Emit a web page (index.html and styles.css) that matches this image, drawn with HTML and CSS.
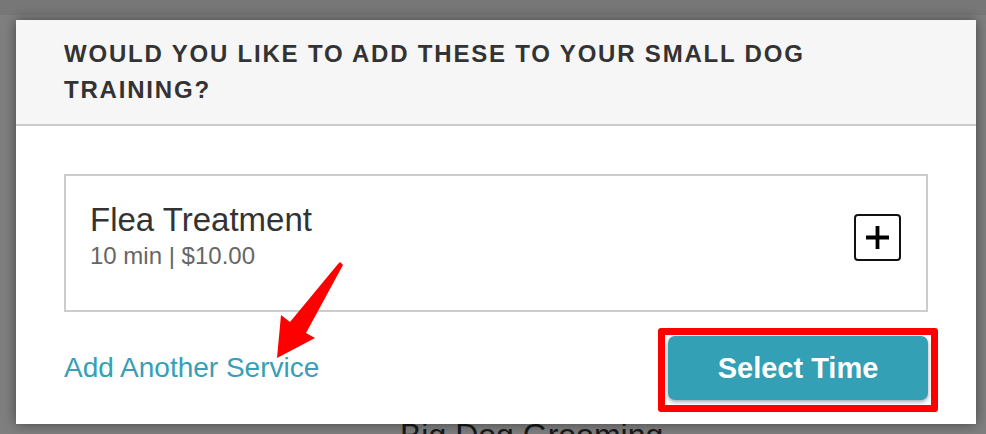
FILE: index.html
```html
<!DOCTYPE html>
<html lang="en">
<head>
    <meta charset="UTF-8">
    <meta name="viewport" content="width=device-width, initial-scale=1.0">
    <title>Add-on Services</title>
    <link rel="stylesheet" href="styles.css">
</head>
<body>
    <div class="page">
        <div class="page-topbar"></div>
        <div class="service-list">
            <div class="service-name">Big Dog Grooming</div>
        </div>
    </div>

    <div class="overlay"></div>

    <div class="modal">
        <div class="modal-header">
            <h1>Would you like to add these to your Small Dog Training?</h1>
        </div>

        <div class="modal-body">
            <div class="addon-card">
                <div class="addon-info">
                    <div class="addon-title">Flea Treatment</div>
                    <div class="addon-meta">10 min | $10.00</div>
                </div>
                <button class="add-btn" aria-label="Add Flea Treatment">
                    <svg width="23" height="23" viewBox="0 0 23 23">
                        <path d="M11.5 0 V23 M0 11.5 H23" stroke="#000" stroke-width="3.8" fill="none"/>
                    </svg>
                </button>
            </div>

            <div class="modal-footer">
                <a href="#" class="add-link">Add Another Service</a>
                <div class="highlight">
                    <button class="btn-primary">Select Time</button>
                </div>
            </div>
        </div>
    </div>

    <!-- annotation arrow -->
    <svg class="annotation" width="986" height="434" viewBox="0 0 986 434">
        <polygon points="277,358 281,315 290,322 338,264 340,262 343,265 306,333 315,338" fill="#ff0000"/>
    </svg>
</body>
</html>
```

FILE: styles.css
```css
* {
    margin: 0;
    padding: 0;
    box-sizing: border-box;
}

body {
    font-family: "Liberation Sans", Arial, Helvetica, sans-serif;
    background-color: #fff;
    width: 986px;
    height: 434px;
    overflow: hidden;
    position: relative;
}

/* page behind the modal */
.page-topbar {
    height: 15px;
    background-color: #eeeeee;
}

.service-list {
    padding: 400px 0 0 400px;
}

.service-name {
    font-size: 32px;
    line-height: 40px;
    color: #333;
}

.overlay {
    position: absolute;
    top: 0;
    left: 0;
    right: 0;
    bottom: 0;
    background-color: rgba(0, 0, 0, 0.5);
}

/* modal */
.modal {
    position: absolute;
    top: 20px;
    left: 16px;
    width: 960px;
    background-color: #fff;
    box-shadow: 0 0 12px rgba(0, 0, 0, 0.45);
}

.modal-header {
    background-color: #f6f6f6;
    border-bottom: 2px solid #cccccc;
    padding: 16px 48px;
}

.modal-header h1 {
    font-size: 24px;
    line-height: 36px;
    font-weight: 700;
    letter-spacing: 1.8px;
    text-transform: uppercase;
    color: #333;
}

.modal-body {
    padding: 48px 48px 12px;
}

.addon-card {
    display: flex;
    justify-content: space-between;
    align-items: flex-start;
    border: 2px solid #cccccc;
    padding: 24px 25px 38px 24px;
}

.addon-title {
    font-size: 33px;
    line-height: 40px;
    color: #333;
}

.addon-meta {
    font-size: 24px;
    line-height: 32px;
    color: #666;
}

.add-btn {
    width: 47px;
    height: 47px;
    margin-top: 14px;
    border: 2px solid #111;
    border-radius: 4px;
    background-color: #fff;
    display: flex;
    align-items: center;
    justify-content: center;
    cursor: pointer;
}

.modal-footer {
    display: flex;
    justify-content: space-between;
    align-items: center;
    margin-top: 16px;
}

.add-link {
    font-size: 28px;
    line-height: 32px;
    color: #35a0b7;
    text-decoration: none;
    margin-bottom: 5px;
}

.highlight {
    border: 7px solid #ff0000;
    border-radius: 3px;
    padding: 1px 3px 5px;
    margin-right: -10px;
}

.btn-primary {
    display: block;
    width: 260px;
    height: 64px;
    border: none;
    border-radius: 7px;
    background-color: #33a0b6;
    color: #fff;
    font-family: inherit;
    font-size: 29px;
    font-weight: 700;
    box-shadow: 0 2px 4px rgba(0, 0, 0, 0.35);
    cursor: pointer;
}

.annotation {
    position: absolute;
    top: 0;
    left: 0;
    pointer-events: none;
}
```
